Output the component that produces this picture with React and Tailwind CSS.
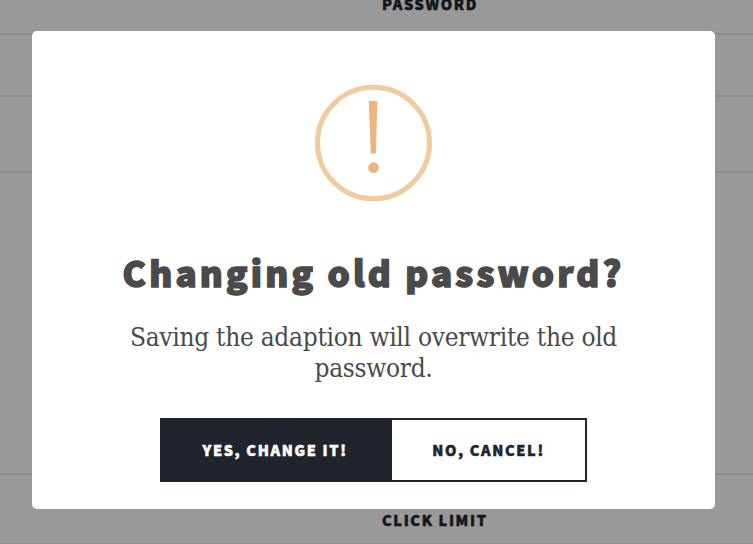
function SettingsPage() {
  return (
    <div className="flex h-full flex-col bg-white text-[14.5px] font-black leading-[20px] tracking-[1.65px] text-[#20252d] [-webkit-text-stroke:0.5px_#20252d]">
      <div className="h-[35px] border-b-2 border-[#e9e9e9] pl-[382px]">
        <div className="-mt-[6px]">PASSWORD</div>
      </div>
      <div className="h-[62px] border-b-2 border-[#e9e9e9]" />
      <div className="h-[76px] border-b-2 border-[#e9e9e9]" />
      <div className="h-[302px] border-b-2 border-[#e9e9e9]" />
      <div className="h-[69px] border-b border-[#e9e9e9] pl-[382px] pt-[35px]">CLICK LIMIT</div>
    </div>
  );
}

function WarningIcon() {
  return (
    <svg className="mt-[53px] block h-[118px] w-[117px] shrink-0" viewBox="0.5 0 117 118">
      <ellipse cx="59" cy="59" rx="56" ry="55.7" fill="none" stroke="#f3ca9f" strokeWidth="5" />
      <path d="M54.3 17H62.8L61.4 69.5H56.3Z" fill="#eeb47d" />
      <circle cx="59" cy="83.7" r="5.4" fill="#eeb47d" />
    </svg>
  );
}

export default function App() {
  return (
    <div className="relative h-[544px] w-[753px] overflow-hidden font-['Noto_Sans_CJK_SC',sans-serif]">
      <SettingsPage />
      <div className="absolute inset-0 flex bg-black/40 pl-[32px] pt-[31px]">
        <div className="flex h-[478px] w-[683px] flex-col items-center rounded-[5px] bg-white" role="dialog">
          <WarningIcon />
          <h2 className="mt-[46px] whitespace-nowrap text-[35px] font-black leading-[48px] tracking-[3.2px] text-[#4a4a4a] [-webkit-text-stroke:1.5px_#4a4a4a]">
            Changing old password?
          </h2>
          <p className="mt-[26px] whitespace-nowrap text-center font-['DejaVu_Serif_Condensed','DejaVu_Serif',serif] text-[26px] leading-[31px] tracking-[-0.28px] text-[#4a4a4a]">
            Saving the adaption will overwrite the old
            <br />
            password.
          </p>
          <div className="mt-[34px] flex h-[64px] w-[427px] border-2 border-[#20252d] text-[14.5px] font-black leading-[20px] tracking-[1.65px]">
            <button className="w-[230px] whitespace-nowrap bg-[#20252d] pr-[4px] text-white [-webkit-text-stroke:0.5px_white]">YES, CHANGE IT!</button>
            <button className="flex-1 whitespace-nowrap text-[#20252d] [-webkit-text-stroke:0.5px_#20252d]">NO, CANCEL!</button>
          </div>
        </div>
      </div>
    </div>
  );
}
